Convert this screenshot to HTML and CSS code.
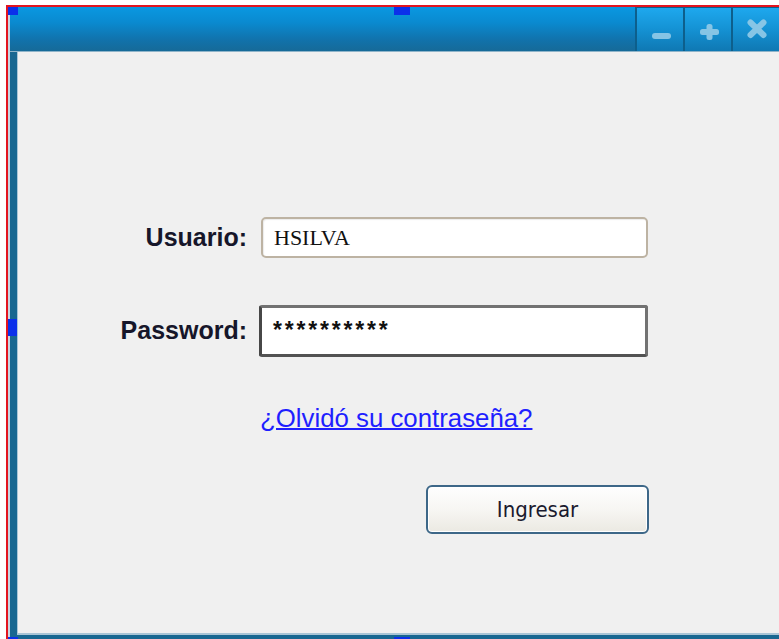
FILE: index.html
```html
<!DOCTYPE html>
<html lang="es">
<head>
<meta charset="utf-8">
<title>Ingreso</title>
<link rel="stylesheet" href="styles.css">
</head>
<body>
<div class="stage">
  <div class="window">
    <div class="titlebar">
      <div class="caption-buttons">
        <button class="cap-btn" aria-label="Minimizar">
          <svg width="46" height="43" viewBox="0 0 46 43"><rect x="15" y="25" width="19" height="6" rx="3" fill="#93cbe8"/></svg>
        </button>
        <button class="cap-btn" aria-label="Maximizar">
          <svg width="46" height="43" viewBox="0 0 46 43"><rect x="15" y="21" width="19" height="6" rx="2.5" fill="#93cbe8"/><rect x="21.5" y="16" width="6" height="16" rx="2.5" fill="#93cbe8"/></svg>
        </button>
        <button class="cap-btn" aria-label="Cerrar">
          <svg width="46" height="43" viewBox="0 0 46 43"><path d="M17.5 14.5 L30.5 27 M30.5 14.5 L17.5 27" stroke="#93cbe8" stroke-width="6" stroke-linecap="round"/></svg>
        </button>
      </div>
    </div>
    <div class="frame">
      <div class="client">
        <form class="login">
          <label class="lbl">Usuario:</label>
          <div class="field user"><span class="user-text">HSILVA</span></div>

          <label class="lbl row2">Password:</label>
          <div class="field pass row2"><span class="pass-text">**********</span></div>

          <a class="forgot" href="#">¿Olvidó su contraseña?</a>

          <button type="button" class="submit">Ingresar</button>
        </form>
      </div>
    </div>
    <span class="handle h-tl"></span>
    <span class="handle h-tm"></span>
    <span class="handle h-ml"></span>
    <span class="handle h-bl"></span>
    <span class="handle h-bm"></span>
  </div>
</div>
</body>
</html>
```

FILE: styles.css
```css
html, body {
  margin: 0;
  padding: 0;
  background: #ffffff;
  overflow: hidden;
}

.stage {
  width: 779px;
  height: 639px;
  padding: 5px 0 0 6px;
  box-sizing: border-box;
}

/* selection outline around the window */
.window {
  position: relative;
  height: 634px;
  border-top: 2px solid #e3141f;
  border-left: 2px solid #e3141f;
  box-sizing: border-box;
  display: flex;
  flex-direction: column;
  background: #c6d6e2;
}

.titlebar {
  height: 44px;
  flex: none;
  margin-left: 2px;
  background: linear-gradient(#0a98e1 0%, #0a8ad0 35%, #1172ab 75%, #166a98 100%);
  display: flex;
  justify-content: flex-end;
  border-bottom: 1px solid #8fb4c9;
}

.caption-buttons {
  display: flex;
  gap: 2px;
  padding: 1px 0 0 2px;
  background: #0d5f8c;
}

.cap-btn {
  width: 46px;
  height: 43px;
  margin: 0;
  padding: 0;
  border: 0;
  background: linear-gradient(#1ea8ee 0%, #1594d6 45%, #0f78b3 100%);
  display: block;
}

.cap-btn svg {
  display: block;
  filter: blur(0.5px);
  opacity: 0.9;
}

/* dark window border on the left and bottom */
.frame {
  flex: 1;
  display: flex;
  margin-left: 2px;
  padding: 0 0 4px 7px;
  background: #186791;
}

.client {
  flex: 1;
  border-left: 1px solid #a9c5d6;
  border-bottom: 2px solid #a9c5d6;
  background: #f0f0f0;
}

.login {
  display: grid;
  grid-template-columns: 229px 389px;
  column-gap: 12px;
  padding-top: 165px;
  align-items: center;
}

.lbl {
  justify-self: end;
  font-family: "Liberation Sans", Arial, sans-serif;
  font-weight: bold;
  font-size: 25px;
  color: #16162a;
}

.lbl.row2 {
  margin-top: 45px;
}

.field {
  box-sizing: border-box;
  background: #ffffff;
  display: flex;
  align-items: center;
}

.field.row2 {
  margin-top: 47px;
}

.user {
  margin-left: 2px;
  height: 41px;
  border: 2px solid #bdb3a3;
  border-radius: 5px;
  padding-left: 11px;
  box-shadow: inset 1px 1px 1px rgba(0, 0, 0, 0.08);
}

.user-text {
  font-family: "Liberation Serif", "Times New Roman", serif;
  font-size: 22px;
  color: #111111;
  padding-top: 1px;
}

.pass {
  height: 52px;
  border: 3px solid #727272;
  border-left-color: #474747;
  border-bottom-color: #525252;
  border-radius: 3px;
  padding-left: 11px;
  align-items: flex-start;
}

.pass-text {
  font-family: "Liberation Sans", Arial, sans-serif;
  font-weight: bold;
  font-size: 23px;
  letter-spacing: 2.8px;
  line-height: 24px;
  padding-top: 10px;
  color: #111111;
}

.forgot {
  grid-column: 2;
  justify-self: start;
  margin: 46px 0 0 1px;
  font-family: "Liberation Sans", Arial, sans-serif;
  font-size: 25.8px;
  line-height: 30px;
  color: #1f1fff;
  text-decoration: underline;
  text-decoration-thickness: 2px;
  text-underline-offset: 1px;
}

.submit {
  grid-column: 2;
  justify-self: end;
  margin: 52px -1px 0 0;
  width: 223px;
  height: 49px;
  border: 2px solid #3d6788;
  border-radius: 6px;
  background: linear-gradient(#fefefe 0%, #f7f6f3 50%, #ebe9e2 100%);
  box-shadow: inset 0 0 0 1px #ffffff;
  font-family: "DejaVu Sans Condensed", "DejaVu Sans", sans-serif;
  font-size: 22px;
  color: #1a1a2e;
  padding: 0;
}

/* resize grips drawn over the frame */
.handle {
  position: absolute;
  background: #0b30ea;
}

.h-tl { left: 0; top: 0; width: 10px; height: 8px; }
.h-tm { left: 386px; top: 0; width: 16px; height: 8px; }
.h-ml { left: 0; top: 312px; width: 9px; height: 17px; }
.h-bl { left: 0; top: 630px; width: 10px; height: 4px; }
.h-bm { left: 386px; top: 630px; width: 16px; height: 4px; }
```
